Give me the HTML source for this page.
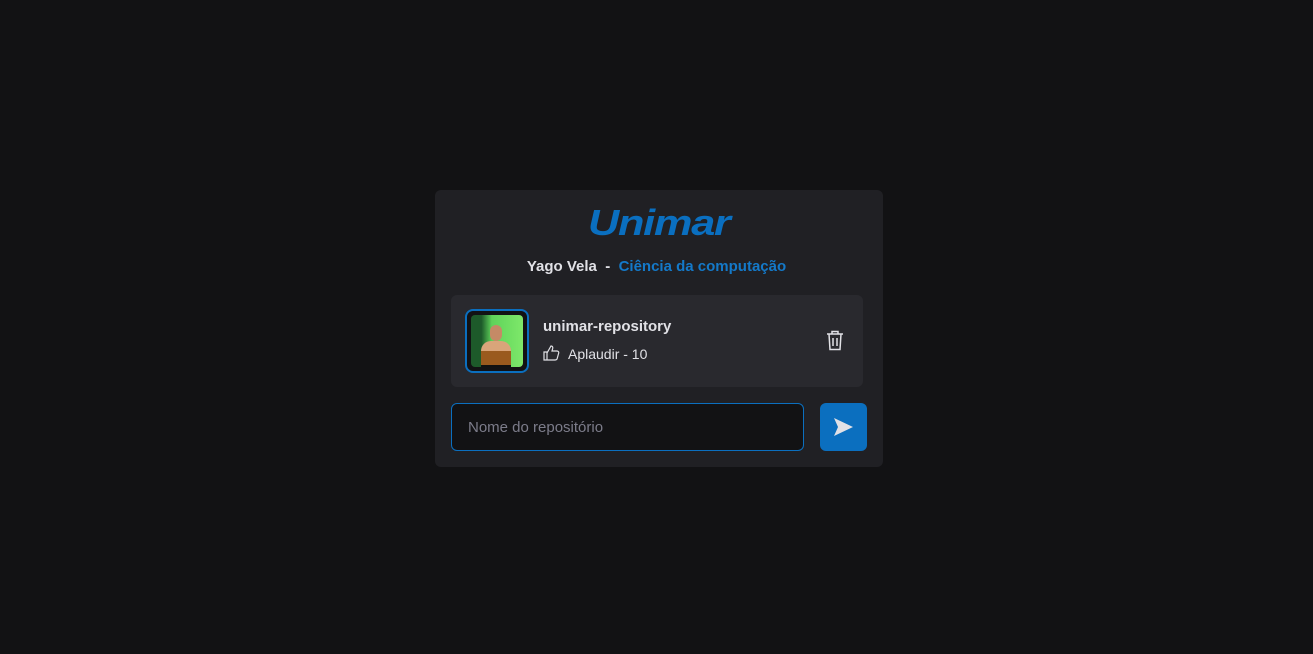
<!DOCTYPE html>
<html><head><style>
body{margin:0;background:#121214;width:1313px;height:654px;font-family:"Liberation Sans",sans-serif;position:relative;overflow:hidden}
.card{position:absolute;left:435px;top:190px;width:448px;height:277px;background:#202024;border-radius:6px}
.logo{position:absolute;left:588px;top:202px;font-size:36px;font-weight:900;font-style:italic;color:#0a6fc0;letter-spacing:-1px;transform:scaleX(1.2);transform-origin:left top}
.name{position:absolute;left:0;width:100%;top:258px;text-align:center;font-size:15px;font-weight:bold;color:#e1e1e6}
.name span{color:#1479c9}
.item{position:absolute;left:451px;top:295px;width:412px;height:92px;background:#29292e;border-radius:6px}
.av{position:absolute;left:465px;top:309px;width:60px;height:60px;border:2px solid #0b6fbf;border-radius:8px;background:#121214}
.av div{position:absolute;left:4px;top:4px;width:52px;height:52px;border-radius:4px;background:linear-gradient(90deg,#1d5a2a 0 20%,#5fd35a 40%,#7ee86a);overflow:hidden}
.av i{position:absolute;left:10px;top:26px;width:30px;height:28px;background:linear-gradient(#d9a57a 0 35%,#9a5a1e 35% 85%,#111 85%);border-radius:10px 10px 0 0}
.av b{position:absolute;left:19px;top:10px;width:12px;height:16px;background:#c58a66;border-radius:6px}
.t{position:absolute;left:543px;top:318px;font-size:15px;font-weight:bold;color:#e1e1e6}
.c{position:absolute;left:568px;top:346px;font-size:14px;color:#e1e1e6}
.in{position:absolute;left:451px;top:403px;width:351px;height:46px;border:1px solid #0b6fbf;border-radius:6px;background:#121214;box-sizing:content-box}
.in span{position:absolute;left:16px;top:15px;font-size:15px;color:#7c7c8a}
.btn{position:absolute;left:820px;top:403px;width:47px;height:48px;background:#0b6fbf;border-radius:6px}
</style></head><body>
<div class="card"></div>
<div class="logo">Unimar</div>
<div class="name">Yago Vela &nbsp;-&nbsp; <span>Ciência da computação</span></div>
<div class="item"></div>
<div class="av"><div><b></b><i></i></div></div>
<div class="t">unimar-repository</div>
<svg style="position:absolute;left:543px;top:345px" width="17" height="16" viewBox="0 0 17 16" fill="none" stroke="#e1e1e6" stroke-width="1.2"><path d="M1 7h3v8H1z M4 8l4-7c1.5 0 2 1 1.7 2.5L9 6h5c1.2 0 2 1 1.7 2l-1.5 5.5c-.3 1-1 1.5-2 1.5H4"/></svg>
<div class="c">Aplaudir - 10</div>
<svg style="position:absolute;left:825px;top:330px" width="20" height="21" viewBox="0 0 20 21" fill="none" stroke="#e1e1e6" stroke-width="1.5"><path d="M2 4h16M7 4V1.5h6V4M4 4l1 15.5h10L16 4M8 8v8M12 8v8"/></svg>
<div class="in"><span>Nome do repositório</span></div>
<div class="btn"><svg style="position:absolute;left:13px;top:14px" width="21" height="20" viewBox="0 0 21 20"><path d="M1 1l19 9-19 9 4-9z" fill="#e1e1e6"/></svg></div>
</body></html>
